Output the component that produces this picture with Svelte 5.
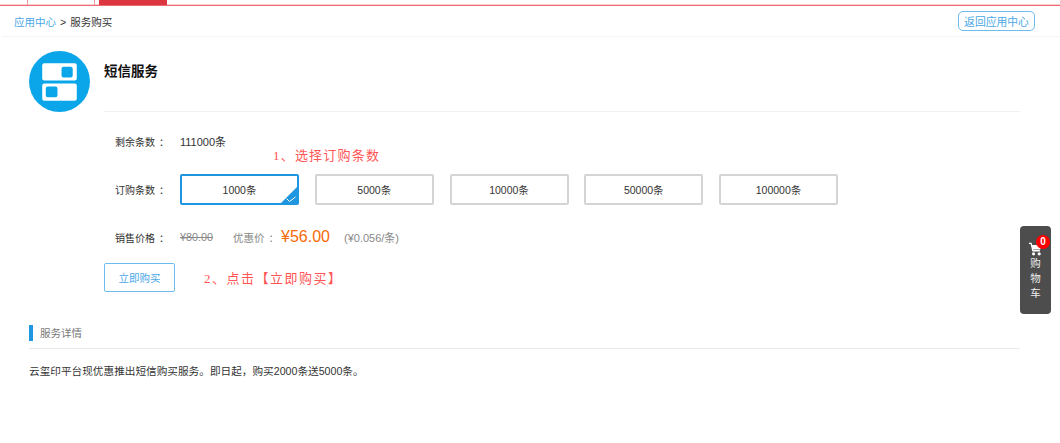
<script lang="ts">
  const options = ["1000条", "5000条", "10000条", "50000条", "100000条"];
  let selected = $state(0);
</script>

<div class="page">
  <div class="topbar">
    <span class="tick tick-a"></span>
    <span class="tick tick-b"></span>
    <span class="active-tab"></span>
  </div>

  <header class="crumbs">
    <div class="path"><a href="#apps">应用中心</a><span class="sep">&gt;</span><span>服务购买</span></div>
    <button type="button" class="back">返回应用中心</button>
  </header>

  <section class="service">
    <div class="logo">
      <svg viewBox="0 0 60 60" width="61" height="61" aria-hidden="true">
        <circle cx="30" cy="30" r="30" fill="#0ba6e9" />
        <rect x="13" y="12" width="34" height="17" rx="2" fill="#fff" />
        <rect x="13" y="32" width="34" height="17" rx="2" fill="#fff" />
        <rect x="32" y="15.5" width="11" height="10.5" rx="2" fill="#0ba6e9" />
        <rect x="16.5" y="35" width="11.5" height="10.5" rx="2" fill="#0ba6e9" />
      </svg>
    </div>
    <div class="info">
      <h1>短信服务</h1>

      <div class="row remain">
        <div class="label">剩余条数<i>：</i></div>
        <div class="value">111000条</div>
      </div>

      <div class="row order">
        <div class="label">订购条数<i>：</i></div>
        <div class="options">
          {#each options as opt, i}
            <button type="button" class="opt" class:on={selected === i} onclick={() => (selected = i)}>
              {opt}
              {#if selected === i}
                <svg class="corner" viewBox="0 0 18 18" width="18" height="18" aria-hidden="true">
                  <path d="M18 0V18H0Z" fill="#1e96e0" />
                  <path d="M6.5 12.5l3 3 6-4.5" fill="none" stroke="#fff" stroke-width="1" />
                </svg>
              {/if}
            </button>
          {/each}
        </div>
      </div>

      <div class="row price">
        <div class="label">销售价格<i>：</i></div>
        <s>¥80.00</s>
        <span class="sale-label">优惠价<i>：</i></span>
        <strong>¥56.00</strong>
        <span class="unit">(¥0.056/条)</span>
      </div>

      <button type="button" class="buy">立即购买</button>

      <div class="note note-1">1、选择订购条数</div>
      <div class="note note-2">2、点击【立即购买】</div>
    </div>
  </section>

  <section class="details">
    <h2>服务详情</h2>
    <p>云玺印平台现优惠推出短信购买服务。即日起，购买2000条送5000条。</p>
  </section>

  <aside class="cart">
    <svg viewBox="0 0 16 16" width="15" height="14" aria-hidden="true">
      <path d="M0.5 1.5H3L5 10H13" fill="none" stroke="#fff" stroke-width="1.5" />
      <path d="M3.8 3.5H15L13.5 8.5H4.8Z" fill="#fff" />
      <circle cx="5.8" cy="13.6" r="1.8" fill="#fff" />
      <circle cx="12.2" cy="13.6" r="1.8" fill="#fff" />
    </svg>
    <span class="badge">0</span>
    <span class="cart-text">购</span>
    <span class="cart-text">物</span>
    <span class="cart-text">车</span>
  </aside>
</div>

<style>
  :global(body) {
    margin: 0;
    background: #fff;
  }

  .page {
    position: relative;
    width: 1060px;
    height: 443px;
    overflow: hidden;
    color: #333;
    font-family: "Liberation Sans", "Noto Sans CJK SC", sans-serif;
    font-size: 10.5px;
  }

  .topbar {
    position: relative;
    height: 5px;
    border-bottom: 1px solid #ec6a70;
    box-shadow: inset 0 -1px #f8d0d2;
  }

  .tick {
    position: absolute;
    top: 0;
    width: 1px;
    height: 5px;
    background: #ea9a9e;
  }

  .tick-a {
    left: 27px;
  }

  .tick-b {
    left: 94px;
  }

  .active-tab {
    position: absolute;
    left: 99px;
    top: 0;
    width: 68px;
    height: 5px;
    background: #dc3640;
  }

  .crumbs {
    display: flex;
    align-items: center;
    justify-content: space-between;
    height: 30px;
    margin-left: 2px;
    padding: 0 25px 0 12px;
    border-bottom: 1px solid #f5f5f5;
  }

  .path a {
    color: #4aa8e6;
    text-decoration: none;
  }

  .sep {
    margin: 0 4px;
  }

  .back {
    width: 77px;
    height: 20px;
    padding: 0;
    border: 1px solid #6dbcee;
    border-radius: 5px;
    background: #fff;
    color: #4aa8e6;
    font: inherit;
    font-size: 10.8px;
  }

  .service {
    position: relative;
    display: flex;
    gap: 14px;
    padding: 14px 40px 0 29px;
  }

  .logo {
    flex: none;
    height: 61px;
  }

  .info {
    position: relative;
    flex: 1;
  }

  h1 {
    height: 61px;
    margin: 0;
    padding-top: 12px;
    box-sizing: border-box;
    border-bottom: 1px solid #f0f0f0;
    color: #111;
    font-size: 13.5px;
    line-height: 18px;
  }

  .row {
    display: flex;
    align-items: center;
  }

  .label {
    width: 76px;
    padding-left: 11px;
    box-sizing: border-box;
    font-size: 10px;
  }

  .label i,
  .sale-label i {
    margin-left: 4px;
    font-style: normal;
  }

  .remain {
    height: 16px;
    margin-top: 21px;
  }

  .value {
    font-size: 11px;
  }

  .order {
    margin-top: 25px;
  }

  .options {
    display: flex;
    gap: 15.75px;
  }

  .opt {
    position: relative;
    width: 119px;
    height: 31px;
    padding: 0;
    box-sizing: border-box;
    border: 2px solid #d4d4d4;
    border-radius: 2px;
    background: #fff;
    color: #333;
    font: inherit;
  }

  .opt.on {
    border-color: #1e96e0;
  }

  .corner {
    position: absolute;
    right: -1px;
    bottom: -1px;
  }

  .price {
    margin-top: 22px;
    height: 20px;
  }

  .price s {
    width: 53px;
    color: #888;
    font-size: 10.8px;
  }

  .sale-label {
    width: 48px;
    color: #888;
  }

  .price strong {
    width: 63px;
    color: #f56a0a;
    font-size: 16px;
    font-weight: 400;
  }

  .unit {
    color: #888;
    font-size: 11px;
  }

  .buy {
    display: block;
    width: 71px;
    height: 29px;
    margin-top: 16px;
    padding: 0;
    border: 1px solid #6dbcee;
    border-radius: 2px;
    background: #fff;
    color: #4aa8e6;
    font: inherit;
  }

  .note {
    position: absolute;
    color: #f55;
    font-family: "Liberation Serif", "Noto Sans CJK SC", serif;
    font-size: 13px;
    line-height: 18px;
    letter-spacing: 1.2px;
  }

  .note-1 {
    left: 169px;
    top: 96px;
  }

  .note-2 {
    left: 100px;
    top: 219px;
    letter-spacing: 1.5px;
  }

  .details {
    margin: 33px 40px 0 29px;
  }

  h2 {
    height: 23px;
    margin: 0;
    border-bottom: 1px solid #e9e9e9;
    color: #777;
    font-size: 10.5px;
    font-weight: 400;
    line-height: 16px;
    position: relative;
    padding-left: 11px;
  }

  h2::before {
    content: "";
    position: absolute;
    left: 0;
    top: 0;
    width: 4px;
    height: 16px;
    background: #1e96e0;
  }

  .details p {
    margin: 14px 0 0;
    font-size: 10.65px;
    line-height: 16px;
  }

  .cart {
    position: absolute;
    left: 1020px;
    top: 226px;
    display: flex;
    flex-direction: column;
    align-items: center;
    width: 31px;
    height: 88px;
    padding-top: 16px;
    box-sizing: border-box;
    border-radius: 4px;
    background: #4d4d4d;
    color: #eee;
  }

  .cart-text {
    height: 15px;
    font-size: 10.5px;
    line-height: 15px;
  }

  .badge {
    position: absolute;
    left: 16px;
    top: 9px;
    width: 14px;
    height: 14px;
    border-radius: 50%;
    background: #f00;
    color: #fff;
    font-size: 10px;
    font-weight: 700;
    line-height: 14px;
    text-align: center;
  }
</style>
